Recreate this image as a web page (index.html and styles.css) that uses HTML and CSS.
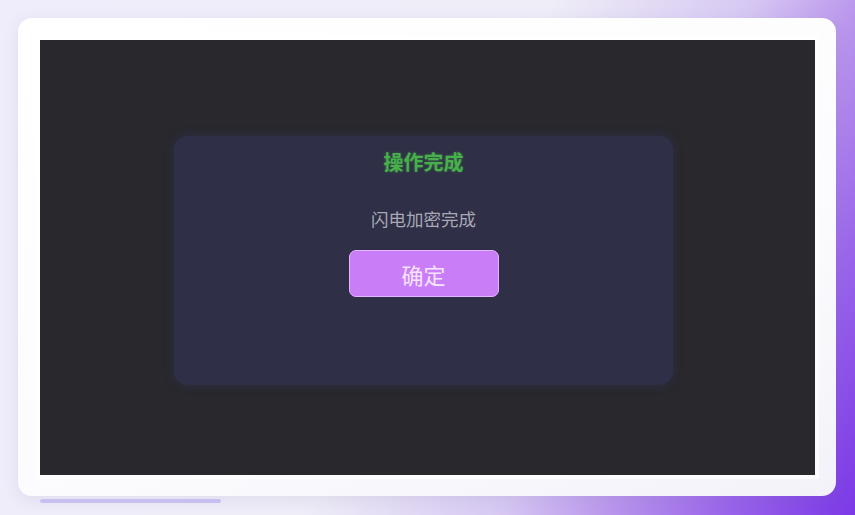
FILE: index.html
```html
<!DOCTYPE html>
<html lang="zh-CN">
<head>
<meta charset="utf-8">
<title>操作完成</title>
<link rel="stylesheet" href="styles.css">
</head>
<body>
<div class="page">
  <div class="card">
    <div class="screen">
      <div class="dialog">
        <div class="title">操作完成</div>
        <div class="msg">闪电加密完成</div>
        <button class="btn">确定</button>
      </div>
    </div>
  </div>
  <div class="bar"></div>
</div>
</body>
</html>
```
FILE: styles.css
```css
html, body {
  margin: 0;
  padding: 0;
}
body {
  width: 855px;
  height: 515px;
  overflow: hidden;
  font-family: "Noto Sans CJK SC", "Noto Sans", sans-serif;
  background: linear-gradient(116deg, #efedfb 0%, #efedf7 50%, #d6c8f3 68%, #b995ec 78%, #9a66ea 88%, #7b38e6 100%);
}
.page {
  padding: 18px 19px 0 18px;
}
.card {
  width: 818px;
  height: 478px;
  box-sizing: border-box;
  padding: 22px 21px 21px 22px;
  border-radius: 14px;
  background: linear-gradient(160deg, #ffffff 0%, #fcfcfe 60%, #f3f2fa 100%);
  box-shadow: 0 4px 16px rgba(90, 80, 150, 0.10);
}
.screen {
  width: 775px;
  height: 435px;
  box-sizing: border-box;
  padding: 96px 0 0 134px;
  background: #28282d;
  outline: 4px solid rgba(255, 255, 255, 0.7);
}
.dialog {
  width: 499px;
  height: 249px;
  border-radius: 14px;
  background: #2f2f47;
  box-shadow: 0 0 6px 3px rgba(46, 46, 68, 0.7);
  display: flex;
  flex-direction: column;
  align-items: center;
}
.title {
  margin-top: 14px;
  font-size: 20px;
  line-height: 24px;
  font-weight: 700;
  color: #47b04b;
  text-shadow: 0 0 3px rgba(70, 176, 74, 0.45);
}
.msg {
  margin-top: 33px;
  font-size: 17.5px;
  line-height: 24px;
  color: #a9a9b6;
}
.btn {
  margin-top: 19px;
  width: 150px;
  height: 47px;
  box-sizing: border-box;
  border: 1px solid #e4b4ff;
  border-radius: 7px;
  background: #c97ef8;
  color: #f6e4ff;
  font-family: "Noto Sans CJK SC", "Noto Sans", sans-serif;
  font-size: 22px;
  line-height: 1;
  padding: 0;
}
.bar {
  margin: 3px 0 0 22px;
  width: 181px;
  height: 4px;
  border-radius: 2px;
  background: #c6c0f0;
}
```
